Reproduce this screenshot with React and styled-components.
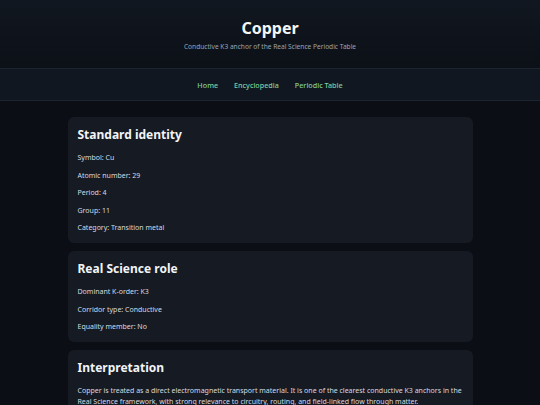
import React from "react";
import styled, { createGlobalStyle } from "styled-components";

const Global = createGlobalStyle`
  html, body {
    margin: 0;
    padding: 0;
    background: #0b0e14;
    font-family: "Noto Sans", "Open Sans", sans-serif;
    color: #e6e9ee;
  }
`;

const Header = styled.header`
  padding: 18px 16px 16px;
  text-align: center;
  background: linear-gradient(180deg, #111720 0%, #0c1017 100%);
`;

const Title = styled.h1`
  margin: 0;
  font-size: 16px;
  line-height: 21px;
  font-weight: 700;
  color: #f4f6f8;
`;

const Subtitle = styled.p`
  margin: 3px 0 0;
  font-size: 6.6px;
  line-height: 10px;
  color: #9aa3b2;
`;

const Nav = styled.nav`
  display: flex;
  justify-content: center;
  align-items: center;
  gap: 16px;
  height: 31px;
  background: #111720;
  border-top: 1px solid #1c2430;
  border-bottom: 1px solid #1c2430;
`;

const NavLink = styled.a`
  font-size: 7.2px;
  font-weight: 500;
  color: #7fcf9e;
  text-decoration: none;
`;

const Main = styled.main`
  max-width: 405px;
  margin: 16px auto 0;
  display: flex;
  flex-direction: column;
  gap: 8px;
`;

const Card = styled.section`
  background: #151a23;
  border-radius: 6px;
  padding: 10px;
`;

const CardTitle = styled.h2`
  margin: 0 0 9px;
  font-size: 12px;
  line-height: 16px;
  font-weight: 700;
  color: #f2f4f7;
`;

const Fact = styled.p`
  margin: 0;
  font-size: 7px;
  line-height: 11px;
  color: #d6dae1;

  & + & {
    margin-top: 6.5px;
  }
`;

const Para = styled.p`
  margin: 0;
  font-size: 7px;
  line-height: 11px;
  color: #d6dae1;
`;

const identity = [
  "Symbol: Cu",
  "Atomic number: 29",
  "Period: 4",
  "Group: 11",
  "Category: Transition metal",
];

const role = [
  "Dominant K-order: K3",
  "Corridor type: Conductive",
  "Equality member: No",
];

export default function App() {
  return (
    <>
      <Global />
      <Header>
        <Title>Copper</Title>
        <Subtitle>Conductive K3 anchor of the Real Science Periodic Table</Subtitle>
      </Header>
      <Nav>
        <NavLink href="#">Home</NavLink>
        <NavLink href="#">Encyclopedia</NavLink>
        <NavLink href="#">Periodic Table</NavLink>
      </Nav>
      <Main>
        <Card>
          <CardTitle>Standard identity</CardTitle>
          {identity.map((t) => (
            <Fact key={t}>{t}</Fact>
          ))}
        </Card>
        <Card>
          <CardTitle>Real Science role</CardTitle>
          {role.map((t) => (
            <Fact key={t}>{t}</Fact>
          ))}
        </Card>
        <Card>
          <CardTitle>Interpretation</CardTitle>
          <Para>
            Copper is treated as a direct electromagnetic transport material. It is one of the
            clearest conductive K3 anchors in the Real Science framework, with strong relevance to
            circuitry, routing, and field-linked flow through matter.
          </Para>
        </Card>
      </Main>
    </>
  );
}
